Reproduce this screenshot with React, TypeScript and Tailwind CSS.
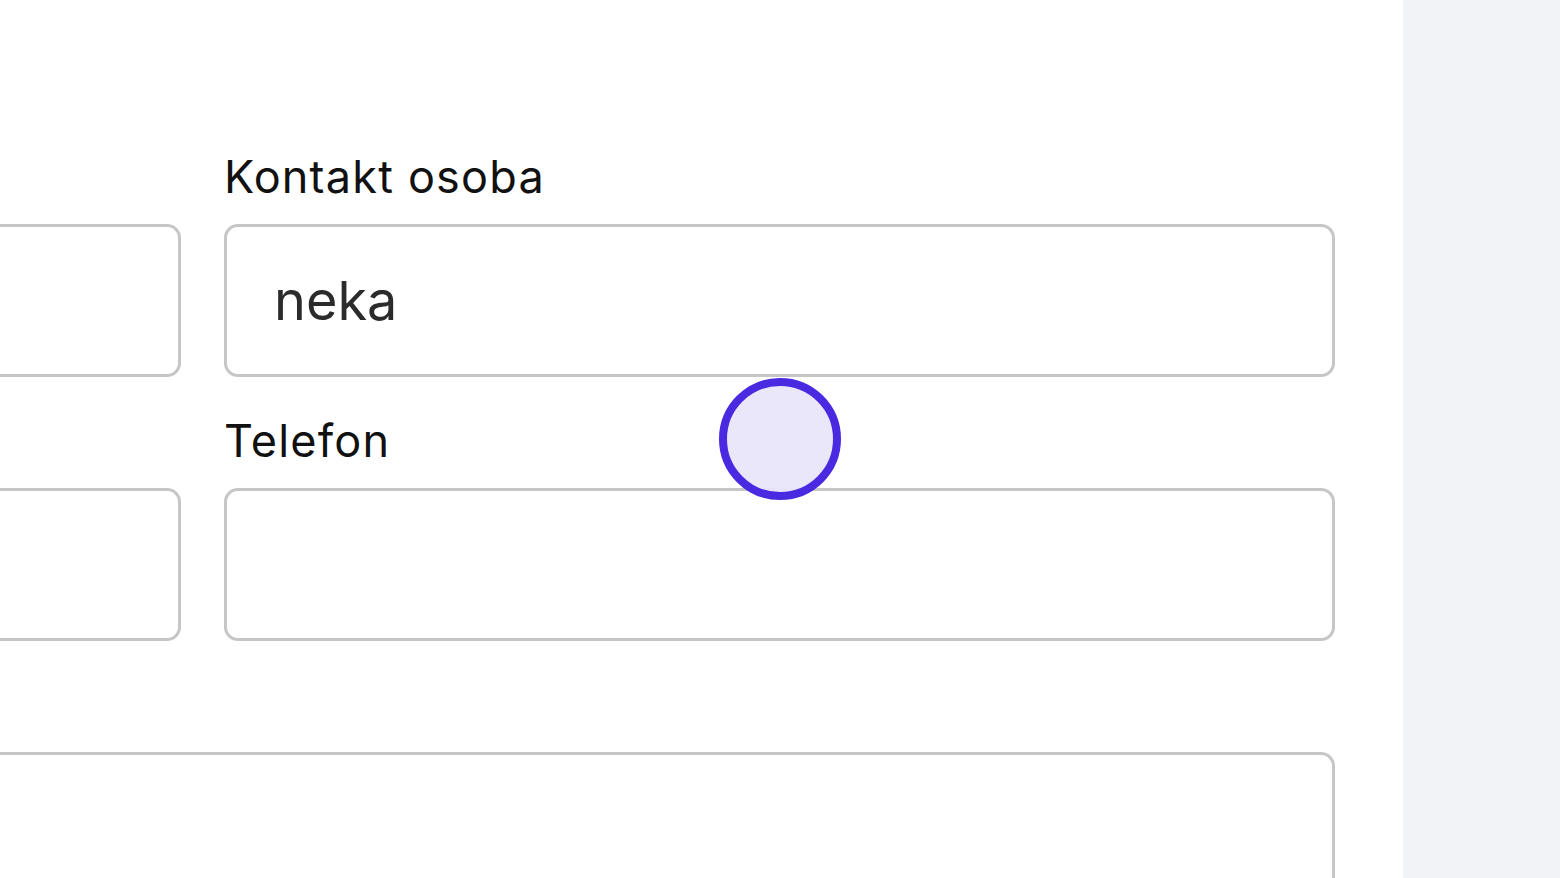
export default function App() {
  const label = "mb-[21px] h-[53px] text-[45px] leading-[53px] tracking-[1.2px] text-[#111111]";
  const box = "h-[153px] rounded-[14px] border-[3px] border-[#c6c6c6] bg-white";
  return (
    <div
      className="relative flex h-[878px] w-[1560px] overflow-hidden bg-white"
      style={{ fontFamily: 'Inter, "Noto Sans", sans-serif' }}
    >
      <div className="relative flex h-full w-[1403px] shrink-0 justify-end overflow-hidden bg-white pr-[68px]">
        <div className="flex shrink-0 flex-col pt-[150px]">
          <div className="grid grid-cols-[1111px_1111px] gap-x-[43px] gap-y-[37px]">
            <div className="flex flex-col">
              <div className={label} />
              <div className={box} />
            </div>
            <div className="flex flex-col">
              <div className={label}>Kontakt osoba</div>
              <div className="flex h-[153px] items-center rounded-[14px] border-[3px] border-[#c6c6c6] bg-white pl-[47px] text-[54px] text-[#2b2b2b]">
                neka
              </div>
            </div>
            <div className="flex flex-col">
              <div className={label} />
              <div className={box} />
            </div>
            <div className="flex flex-col">
              <div className={label}>Telefon</div>
              <div className={box} />
            </div>
            <div className="col-span-2 flex flex-col">
              <div className={label} />
              <div className="h-[300px] rounded-[14px] border-[3px] border-[#c6c6c6] bg-white" />
            </div>
          </div>
        </div>
      </div>
      <div className="h-full flex-1 bg-[#f1f3f6]" />
      <div className="pointer-events-none absolute left-[719px] top-[378px] h-[122px] w-[122px] rounded-full border-[8px] border-[#4a2ae0] bg-[#e9e6fb]/95" />
    </div>
  );
}
